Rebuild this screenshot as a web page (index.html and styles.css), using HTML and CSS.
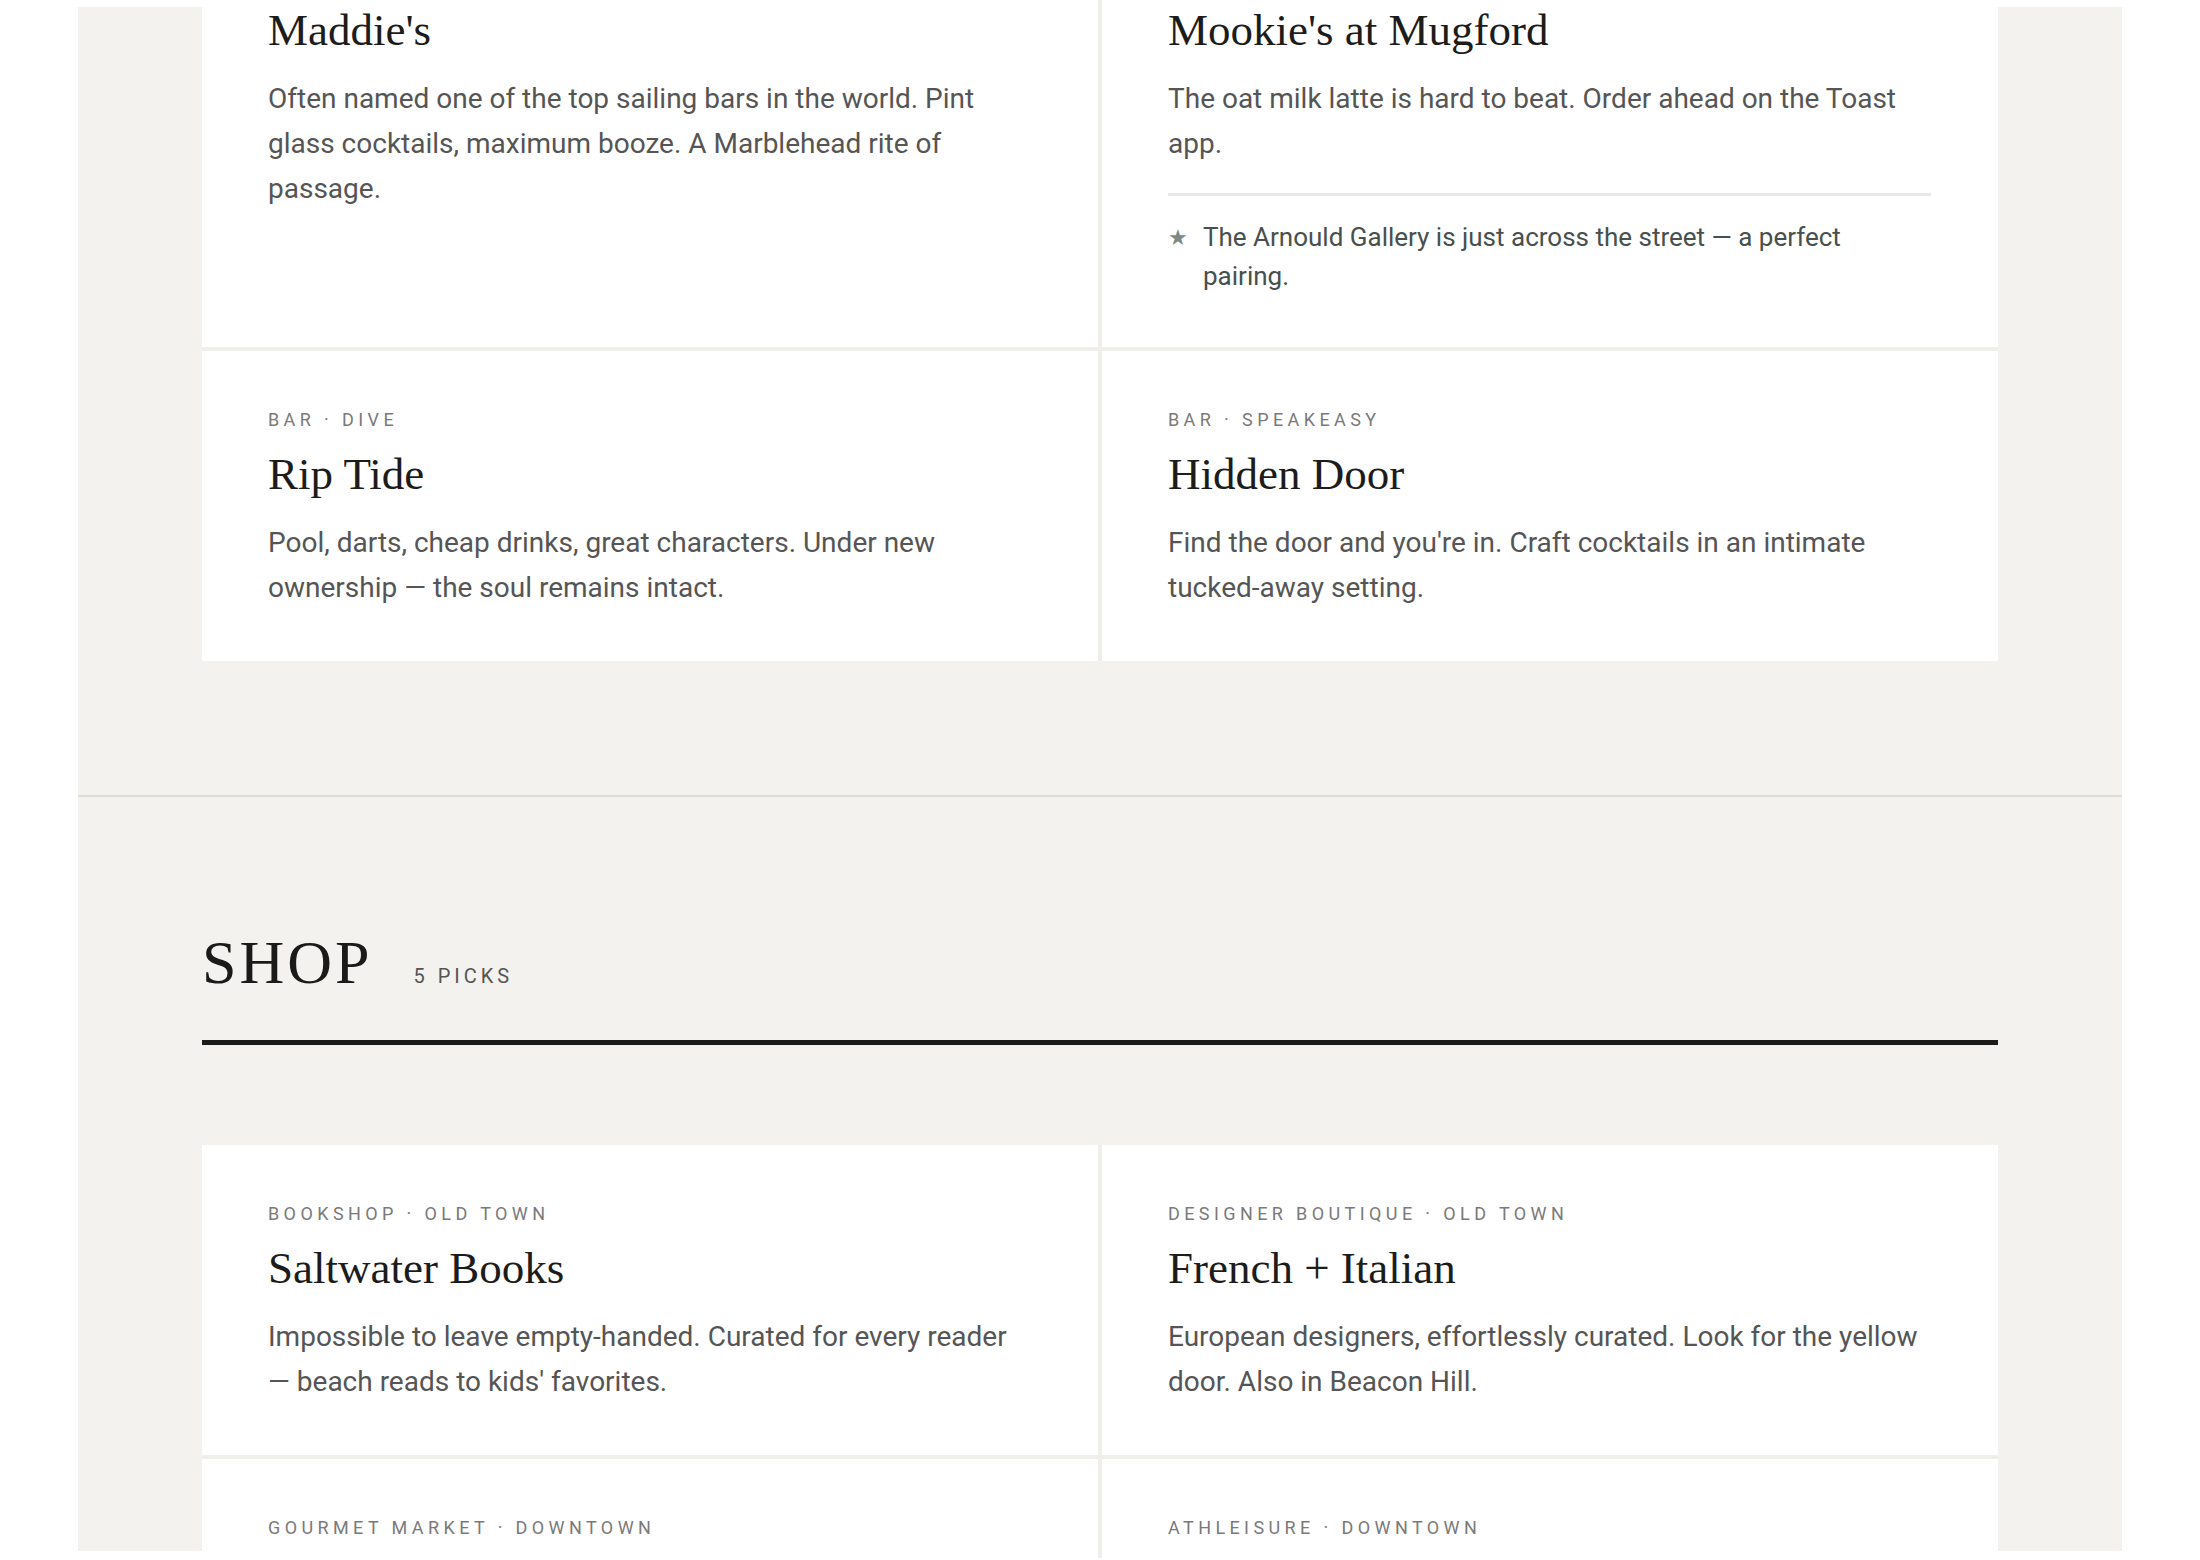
FILE: index.html
```html
<!DOCTYPE html>
<html lang="en">
<head>
    <meta charset="UTF-8">
    <meta name="viewport" content="width=device-width, initial-scale=1.0">
    <title>Marblehead Picks</title>
    <link rel="stylesheet" href="styles.css">
</head>
<body>
    <div class="page">
        <!-- bars (scrolled part way through) -->
        <section class="section section-bars">
            <div class="grid">
                <article class="pick">
                    <h3 class="pick-name">Maddie's</h3>
                    <p class="pick-text">Often named one of the top sailing bars in the world. Pint glass cocktails, maximum booze. A Marblehead rite of passage.</p>
                </article>
                <article class="pick">
                    <h3 class="pick-name">Mookie's at Mugford</h3>
                    <p class="pick-text">The oat milk latte is hard to beat. Order ahead on the Toast app.</p>
                    <div class="pick-note">
                        <span class="pick-star">★</span>
                        <p>The Arnould Gallery is just across the street — a perfect pairing.</p>
                    </div>
                </article>
                <article class="pick">
                    <p class="pick-tag">Bar · Dive</p>
                    <h3 class="pick-name">Rip Tide</h3>
                    <p class="pick-text">Pool, darts, cheap drinks, great characters. Under new ownership — the soul remains intact.</p>
                </article>
                <article class="pick">
                    <p class="pick-tag">Bar · Speakeasy</p>
                    <h3 class="pick-name">Hidden Door</h3>
                    <p class="pick-text">Find the door and you're in. Craft cocktails in an intimate tucked-away setting.</p>
                </article>
            </div>
        </section>

        <section class="section section-shop">
            <header class="section-head">
                <h2 class="section-title">Shop</h2>
                <span class="section-count">5 picks</span>
            </header>
            <div class="grid">
                <article class="pick">
                    <p class="pick-tag">Bookshop · Old Town</p>
                    <h3 class="pick-name">Saltwater Books</h3>
                    <p class="pick-text">Impossible to leave empty-handed. Curated for every reader — beach reads to kids' favorites.</p>
                </article>
                <article class="pick">
                    <p class="pick-tag">Designer Boutique · Old Town</p>
                    <h3 class="pick-name">French + Italian</h3>
                    <p class="pick-text">European designers, effortlessly curated. Look for the yellow door. Also in Beacon Hill.</p>
                </article>
                <article class="pick">
                    <p class="pick-tag">Gourmet Market · Downtown</p>
                </article>
                <article class="pick">
                    <p class="pick-tag">Athleisure · Downtown</p>
                </article>
            </div>
        </section>
    </div>
</body>
</html>
```

FILE: styles.css
```css
body {
    margin: 0;
    padding: 7px 0 9px;
    background-color: #fff;
}

/* fixed frame; cards may run a little past its edge */
.page {
    display: flow-root;
    width: 2044px;
    height: 1544px;
    margin: 0 auto;
    overflow: clip;
    overflow-clip-margin: 7px;
    background-color: #f3f2ee;
    font-family: Roboto, "Liberation Sans", sans-serif;
}

.section {
    padding: 0 124px 134px;
}

/* the bars list is already scrolled past its header */
.section-bars .grid {
    margin-top: -56px;
}

.section-shop {
    border-top: 2px solid #dddcd7;
    padding-top: 131px;
}

.section-head {
    display: flex;
    align-items: baseline;
    gap: 41px;
    padding-bottom: 44px;
    border-bottom: 5px solid #1b1b19;
    margin-bottom: 100px;
}

.section-title {
    margin: 0;
    font-family: "Liberation Serif", serif;
    font-weight: 400;
    font-size: 62px;
    line-height: 68px;
    letter-spacing: 3px;
    text-transform: uppercase;
    color: #1a1a18;
}

.section-count {
    font-size: 20px;
    letter-spacing: 4px;
    text-transform: uppercase;
    color: #555;
}

.grid {
    display: grid;
    grid-template-columns: 1fr 1fr;
    gap: 4px;
    background-color: #efeeea;
}

.pick {
    background-color: #fff;
    padding: 56px 67px 51px 66px;
}

.pick-tag {
    margin: 0 0 19px;
    font-size: 18px;
    line-height: 25px;
    letter-spacing: 4.4px;
    text-transform: uppercase;
    color: #7a7a7a;
}

.pick-name {
    margin: 0;
    font-family: "Liberation Serif", serif;
    font-weight: 400;
    font-size: 45px;
    line-height: 46px;
    color: #1c1c1a;
}

.pick-text {
    margin: 23px 0 0;
    max-width: 752px;
    font-size: 28px;
    line-height: 45px;
    color: #555;
}

.pick-note {
    display: flex;
    align-items: baseline;
    gap: 15px;
    margin-top: 27px;
    padding-top: 22px;
    border-top: 3px solid #e9e9e7;
}

.pick-star {
    position: relative;
    top: -1px;
    font-size: 22px;
    color: #7d8984;
}

.pick-note p {
    margin: 0;
    max-width: 680px;
    font-size: 26px;
    line-height: 39px;
    color: #47504c;
}
```
